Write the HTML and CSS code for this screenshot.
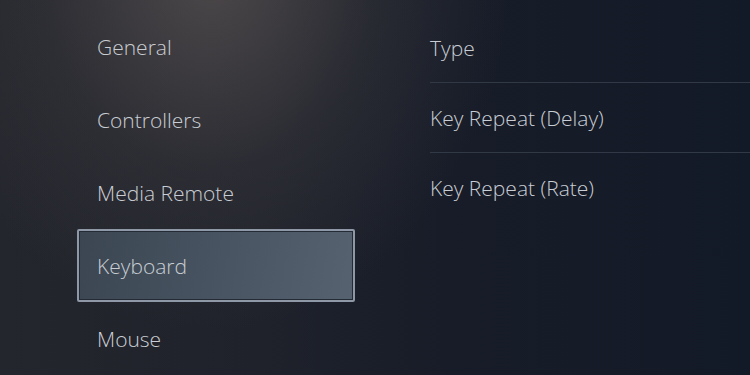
FILE: index.html
```html
<!DOCTYPE html>
<html>
<head>
  <title>Keyboard</title>
  <link rel="stylesheet" href="styles.css">
</head>
<body>
  <div class="settings">
    <div class="menu">
      <div class="menu-item">General</div>
      <div class="menu-item">Controllers</div>
      <div class="menu-item">Media Remote</div>
      <div class="menu-item selected">Keyboard</div>
      <div class="menu-item">Mouse</div>
    </div>
    <div class="options">
      <div class="option">Type</div>
      <div class="option">Key Repeat (Delay)</div>
      <div class="option">Key Repeat (Rate)</div>
    </div>
  </div>
</body>
</html>
```

FILE: styles.css
```css
html, body {
  height: 100%;
}
body {
  margin: 0;
  overflow: hidden;
  font-family: "Open Sans", Arial, sans-serif;
  font-weight: 300;
  color: #c9cdd3;
  background-color: #151b27;
  background-image:
    radial-gradient(ellipse 300px 360px at 210px -30px, rgba(88, 82, 82, 0.8), rgba(62, 60, 64, 0.4) 55%, rgba(40, 42, 50, 0) 100%),
    linear-gradient(90deg, #24262d 0%, #1f222b 35%, #171c28 60%, #131a27 100%);
}
.settings {
  display: flex;
  height: 100%;
}
.menu {
  display: flex;
  flex-direction: column;
  width: 278px;
  margin-left: 77px;
  padding-top: 11px;
}
.menu-item {
  display: flex;
  align-items: center;
  height: 73px;
  box-sizing: border-box;
  padding-left: 20px;
  font-size: 21px;
}
.menu-item.selected {
  border: 2px solid #8e98a6;
  border-radius: 2px;
  box-shadow: inset 0 0 0 1px #242b35;
  background: linear-gradient(100deg, #3b4652 0%, #46525f 45%, #576271 100%);
  padding-left: 18px;
}
.options {
  flex: 1;
  margin-left: 75px;
  padding-top: 13px;
}
.option {
  display: flex;
  align-items: center;
  height: 69px;
  font-size: 21px;
  border-bottom: 1px solid #323946;
}
.option:last-child {
  border-bottom: none;
}
```
